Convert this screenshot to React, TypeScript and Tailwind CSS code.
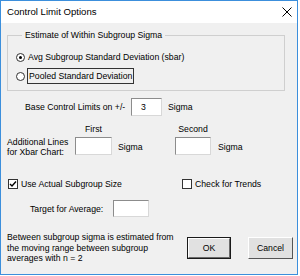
import React from "react";

const font = { fontFamily: '"Liberation Sans", Arial, sans-serif' };

function Radio({ checked }: { checked?: boolean }) {
  return (
    <span className="w-[9px] h-[9px] rounded-full border border-[#333333] bg-white flex items-center justify-center shrink-0">
      {checked ? <span className="w-[3px] h-[3px] rounded-full bg-black" /> : null}
    </span>
  );
}

function Check({ checked }: { checked?: boolean }) {
  return (
    <span className="w-[10px] h-[10px] border border-[#333333] bg-white flex items-center justify-center shrink-0">
      {checked ? (
        <svg width="8" height="8" viewBox="0 0 8 8">
          <path d="M1 4 L3 6 L7 1.5" fill="none" stroke="#000" strokeWidth="1.4" />
        </svg>
      ) : null}
    </span>
  );
}

function Field({ w, h, children, pad }: { w: string; h: string; children?: React.ReactNode; pad?: string }) {
  return (
    <div
      className={`${w} ${h} ${pad ?? ""} bg-white border-t border-l border-t-[#8c8c8c] border-l-[#8c8c8c] border-r border-b border-r-[#d8d8d8] border-b-[#d8d8d8] flex items-center`}
    >
      {children}
    </div>
  );
}

export default function App() {
  return (
    <div
      className="w-[298px] h-[275px] border border-[#3c8fdc] bg-[#f0f0f0] flex flex-col text-[8.7px] text-black leading-[12px]"
      style={font}
    >
      <div className="h-[22px] bg-white flex items-center justify-between pl-[6px] pr-[5px] shrink-0">
        <span className="text-[9.6px]">Control Limit Options</span>
        <svg width="10" height="10" viewBox="0 0 10 10">
          <path d="M0.5 0.5 L9.5 9.5 M9.5 0.5 L0.5 9.5" stroke="#000" strokeWidth="1" />
        </svg>
      </div>

      <div className="flex-1 pl-[6px] flex flex-col">
        <fieldset className="mt-[6px] w-[278px] h-[62px] border border-[#cfcfcf] pl-[8px]">
          <legend className="ml-[6px] px-[3px] h-[12px] leading-[12px]">Estimate of Within Subgroup Sigma</legend>
          <div className="mt-[8px] h-[16px] flex items-center">
            <Radio checked />
            <span className="ml-[3px] whitespace-nowrap">Avg Subgroup Standard Deviation (sbar)</span>
          </div>
          <div className="mt-[3px] h-[16px] flex items-center">
            <Radio />
            <span className="ml-[2px] h-[16px] border border-[#333333] px-[1px] flex items-center whitespace-nowrap">
              Pooled Standard Deviation
            </span>
          </div>
        </fieldset>

        <div className="mt-[7px] h-[18px] flex items-center">
          <span className="ml-[18px] w-[106px] whitespace-nowrap">Base Control Limits on +/-</span>
          <Field w="w-[31px]" h="h-[18px]" pad="pl-[9px]">
            3
          </Field>
          <span className="ml-[6px]">Sigma</span>
        </div>

        <div className="mt-[7px] flex">
          <div className="w-[68px] mt-[14px] leading-[10px] whitespace-nowrap">
            Additional Lines
            <br />
            for Xbar Chart:
          </div>
          <div className="w-[37px] flex flex-col items-center">
            <div className="h-[12px]">First</div>
            <div className="mt-[2px]">
              <Field w="w-[37px]" h="h-[18px]" />
            </div>
          </div>
          <div className="w-[63px] pl-[6px] mt-[18px]">Sigma</div>
          <div className="w-[36px] flex flex-col items-center">
            <div className="h-[12px]">Second</div>
            <div className="mt-[2px]">
              <Field w="w-[36px]" h="h-[18px]" />
            </div>
          </div>
          <div className="pl-[7px] mt-[18px]">Sigma</div>
        </div>

        <div className="mt-[21px] h-[12px] flex items-center">
          <div className="w-[175px] flex items-center">
            <span className="ml-[1px]">
              <Check checked />
            </span>
            <span className="ml-[3px] whitespace-nowrap">Use Actual Subgroup Size</span>
          </div>
          <Check />
          <span className="ml-[3px] whitespace-nowrap">Check for Trends</span>
        </div>

        <div className="mt-[10px] h-[17px] flex items-center">
          <span className="ml-[23px] w-[83px] whitespace-nowrap">Target for Average:</span>
          <Field w="w-[36px]" h="h-[17px]" />
        </div>

        <div className="mt-[15px] flex">
          <div className="w-[180px] leading-[10.5px] whitespace-nowrap">
            Between subgroup sigma is estimated from
            <br />
            the moving range between subgroup
            <br />
            averages with n = 2
          </div>
          <button className="mt-[5px] w-[44px] h-[22px] border border-[#1a1a1a] bg-[#e1e1e1] flex items-center justify-center">
            <span className="w-full h-full border-r border-b border-r-[#6a6a6a] border-b-[#6a6a6a] border-l border-t border-l-white border-t-white flex items-center justify-center">
              OK
            </span>
          </button>
          <button className="mt-[5px] ml-[17px] w-[45px] h-[22px] bg-[#e1e1e1] border-l border-t border-l-white border-t-white border-r border-b border-r-[#555555] border-b-[#555555] flex items-center justify-center">
            Cancel
          </button>
        </div>
      </div>
    </div>
  );
}
